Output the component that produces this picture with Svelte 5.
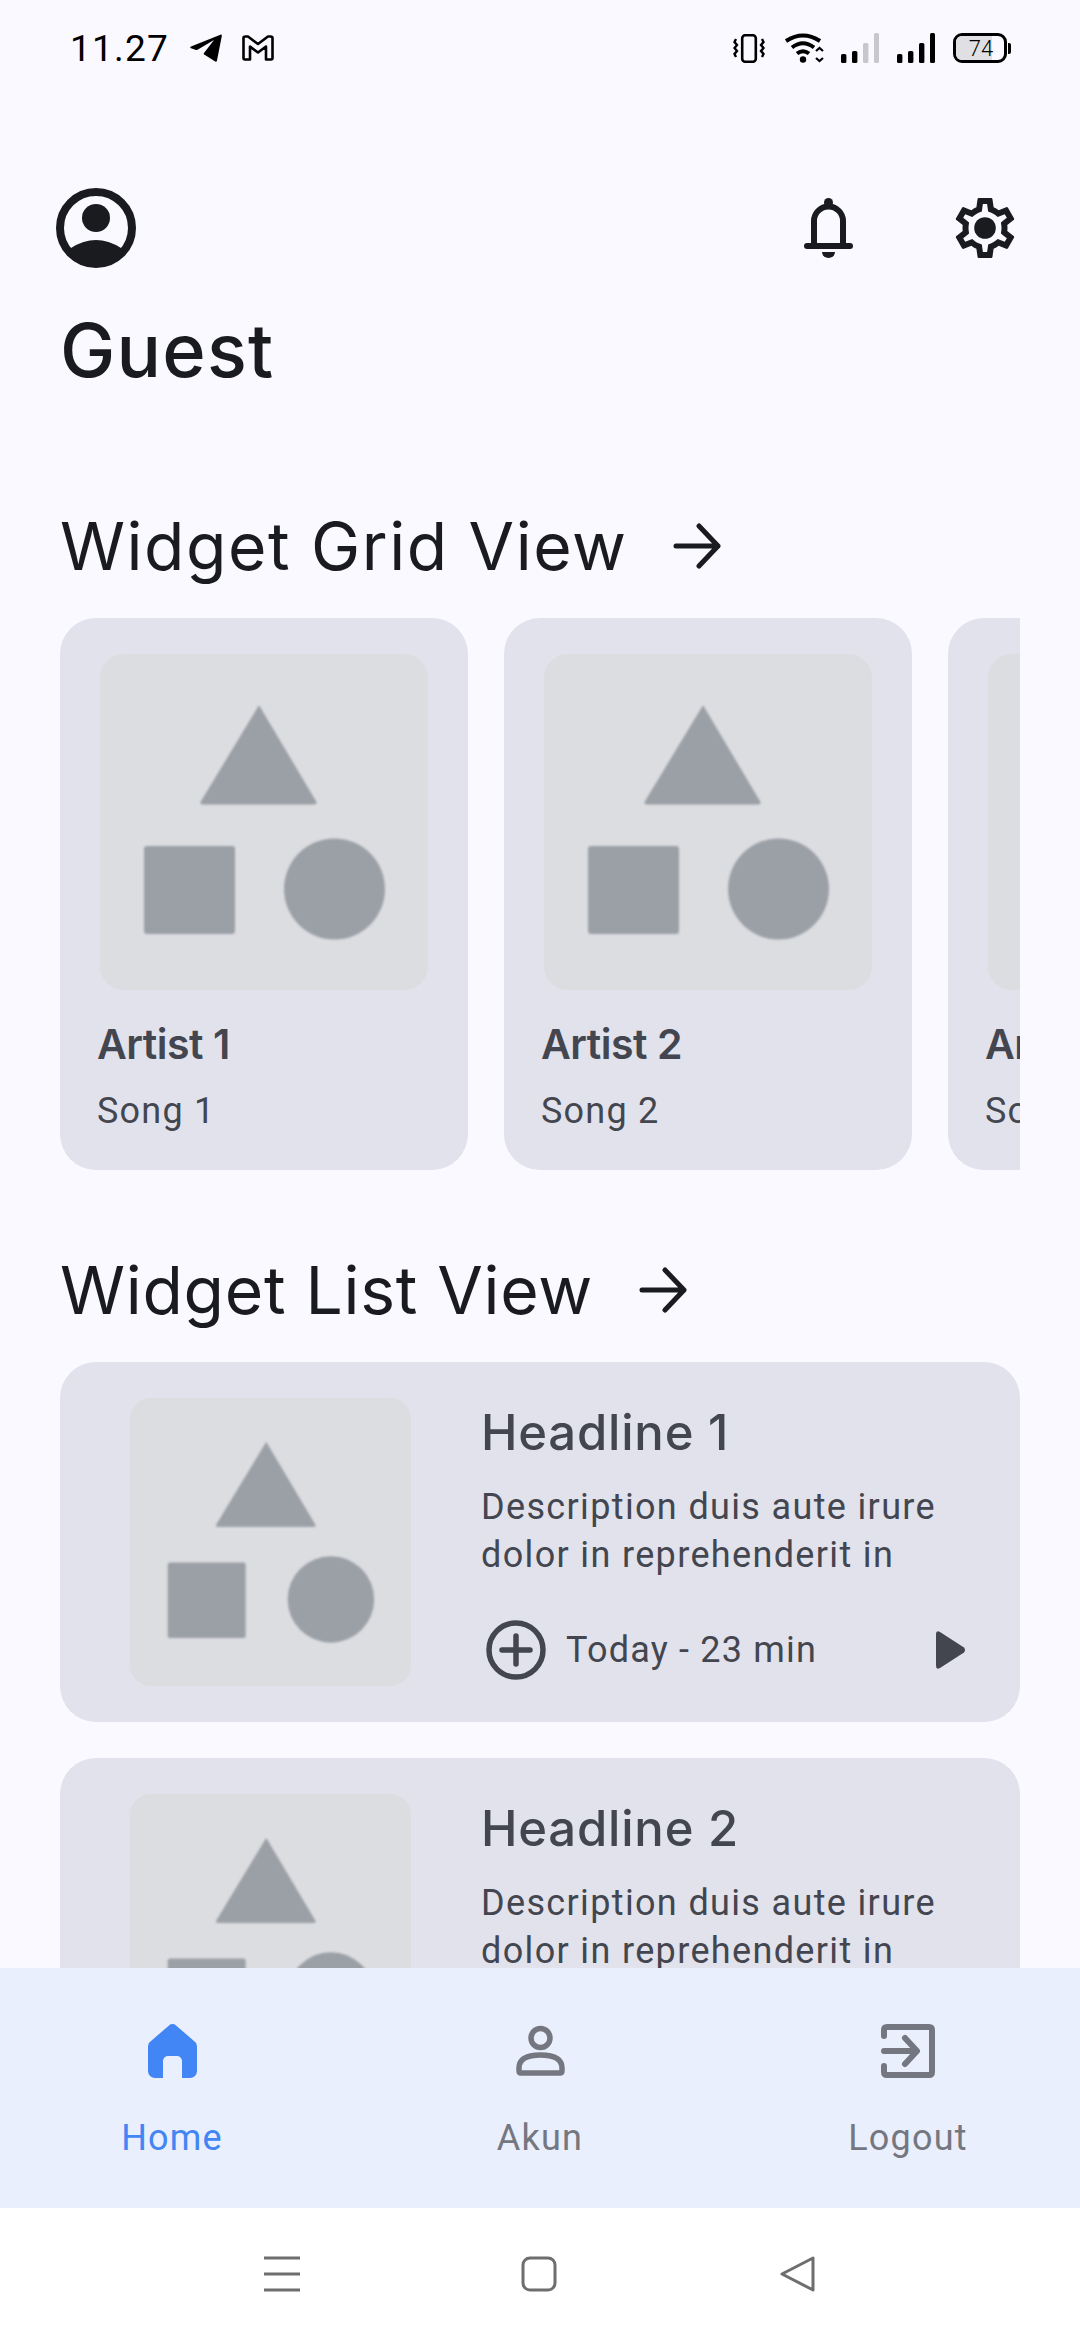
<script>
  const artists = [
    { name: 'Artist 1', song: 'Song 1' },
    { name: 'Artist 2', song: 'Song 2' },
    { name: 'Artist 3', song: 'Song 3' }
  ]
  const headlines = ['Headline 1', 'Headline 2', 'Headline 3']
</script>

{#snippet placeholder(cls)}
  <div class="thumb {cls}">
    <svg class="shapes" viewBox="0 0 328 336">
      <path d="M159 52 L216 148 Q217 150 214 150 H103 Q100 150 101 148 Z" fill="#9ba0a6" stroke="#9ba0a6" stroke-width="1" stroke-linejoin="round"/>
      <rect x="44" y="192" width="91" height="88" rx="3" fill="#9ba0a6"/>
      <circle cx="234.5" cy="235" r="50.5" fill="#9ba0a6"/>
    </svg>
  </div>
{/snippet}

{#snippet arrow()}
  <svg class="arrow" viewBox="0 0 48 46" fill="none" stroke="#1a1b1f" stroke-width="5" stroke-linecap="round" stroke-linejoin="round">
    <path d="M3 23 H45 M26 3 L45 23 L26 43"/>
  </svg>
{/snippet}

<div class="screen">
  <div class="status">
    <span class="time">11.27</span>
    <svg class="tg" viewBox="0 0 32 28"><path d="M31 0.5 Q32 0.5 31.8 2 L27 26.5 Q26.6 28.5 24.8 27.3 L14.2 20.6 Q13.2 19.9 14 19 L24 6 L7.5 15.8 Q6.8 16.2 6 15.9 L1 14.2 Q-0.5 13.4 1 12.5 Z" fill="#000"/></svg>
    <svg class="gm" viewBox="0 0 32 26" fill="none" stroke="#000" stroke-width="2.6" stroke-linejoin="round"><path d="M1.5 3 Q1.5 1.5 3.5 1.5 H6 L16 9 L26 1.5 H28.5 Q30.5 1.5 30.5 3 V23 Q30.5 24.5 29 24.5 H24 V11.5 L16 17.5 L8 11.5 V24.5 H3 Q1.5 24.5 1.5 23 Z"/></svg>
    <div class="status-right">
      <svg class="vib" viewBox="0 0 32 29" fill="none" stroke="#000"><rect x="9.2" y="1.2" width="13.6" height="26.6" rx="3" stroke-width="2.6"/><path d="M3 5 L1.5 8 L4 11 L1.5 14 L4 17 L1.5 20 L3 23 M29 5 L30.5 8 L28 11 L30.5 14 L28 17 L30.5 20 L29 23" stroke-width="2.4"/></svg>
      <svg class="wifi" viewBox="0 0 40 30" fill="none" stroke="#000" stroke-width="4"><path d="M1 8 Q18 -3 35 8 M7 14.5 Q18 6 29 14.5 M12 20.5 Q18 16 24 20.5"/><circle cx="18" cy="26.5" r="3.2" fill="#000" stroke="none"/><path d="M31 18 L34.5 15 L38 18 M31 25 L34.5 28 L38 25" stroke-width="2.2"/></svg>
      <svg class="sig" viewBox="0 0 38 30"><rect x="0" y="21" width="5.4" height="9" rx="1.5"/><rect x="11" y="18" width="5.4" height="12" rx="1.5"/><rect x="22" y="10" width="5.4" height="20" rx="1.5" fill="#c8c8cc"/><rect x="33" y="0" width="5" height="30" rx="1.5" fill="#c8c8cc"/></svg>
      <svg class="sig" viewBox="0 0 38 30"><rect x="0" y="21" width="5.4" height="9" rx="1.5"/><rect x="11" y="18" width="5.4" height="12" rx="1.5"/><rect x="22" y="10" width="5.4" height="20" rx="1.5"/><rect x="33" y="0" width="5" height="30" rx="1.5"/></svg>
      <div class="battery">
        <div class="battery-fill"></div>
        <span class="battery-num">74</span>
      </div>
      <div class="battery-nub"></div>
    </div>
  </div>

  <div class="scroll">
    <div class="top-row">
      <svg class="avatar" viewBox="0 0 80 80">
        <circle cx="40" cy="40" r="36" fill="none" stroke="#1a1b1f" stroke-width="8"/>
        <circle cx="40" cy="30" r="14" fill="#1a1b1f"/>
        <path d="M15 60 Q40 44 65 60 L68.5 62 A36 36 0 0 1 11.5 62 Z" fill="#1a1b1f"/>
      </svg>
      <svg class="bell" viewBox="0 0 49 60" fill="none" stroke="#1a1b1f" stroke-width="6" stroke-linecap="round">
        <path d="M10 48 V23 a14.5 14.5 0 0 1 29 0 V48"/>
        <path d="M3 48 H46"/>
        <circle cx="24.5" cy="4.5" r="4.5" fill="#1a1b1f" stroke="none"/>
        <path d="M18 54 H31 A6.5 6 0 0 1 18 54 Z" fill="#1a1b1f" stroke="none"/>
      </svg>
      <svg class="gear" viewBox="2 2 20 20" fill="#1a1b1f">
        <path d="M19.43 12.98c.04-.32.07-.64.07-.98 0-.34-.03-.66-.07-.98l2.11-1.65c.19-.15.24-.42.12-.64l-2-3.46c-.09-.16-.26-.25-.44-.25-.06 0-.12.01-.17.03l-2.49 1c-.52-.4-1.08-.73-1.69-.98l-.38-2.65C14.46 2.18 14.25 2 14 2h-4c-.25 0-.46.18-.49.42l-.38 2.65c-.61.25-1.17.59-1.69.98l-2.49-1c-.06-.02-.12-.03-.18-.03-.17 0-.34.09-.43.25l-2 3.46c-.13.22-.07.49.12.64l2.11 1.65c-.04.32-.07.65-.07.98 0 .33.03.66.07.98l-2.11 1.65c-.19.15-.24.42-.12.64l2 3.46c.09.16.26.25.44.25.06 0 .12-.01.17-.03l2.49-1c.52.4 1.08.73 1.69.98l.38 2.65c.03.24.24.42.49.42h4c.25 0 .46-.18.49-.42l.38-2.65c.61-.25 1.17-.59 1.69-.98l2.49 1c.06.02.12.03.18.03.17 0 .34-.09.43-.25l2-3.46c.12-.22.07-.49-.12-.64l-2.11-1.65zm-1.98-1.71c.04.31.05.52.05.73 0 .21-.02.43-.05.73l-.14 1.13.89.7 1.08.84-.7 1.21-1.27-.51-1.04-.42-.9.68c-.43.32-.84.56-1.25.73l-1.06.43-.16 1.13-.2 1.35h-1.4l-.19-1.35-.16-1.13-1.06-.43c-.43-.18-.83-.41-1.23-.71l-.91-.7-1.06.43-1.27.51-.7-1.21 1.08-.84.89-.7-.14-1.13c-.03-.31-.05-.54-.05-.74s.02-.43.05-.73l.14-1.13-.89-.7-1.08-.84.7-1.21 1.27.51 1.04.42.9-.68c.43-.32.84-.56 1.25-.73l1.06-.43.16-1.13.2-1.35h1.39l.19 1.35.16 1.13 1.06.43c.43.18.83.41 1.23.71l.91.7 1.06-.43 1.27-.51.7 1.21-1.07.85-.89.7.14 1.13z"/>
        <circle cx="12" cy="12" r="3.6"/>
      </svg>
    </div>

    <h1 class="guest">Guest</h1>

    <div class="section-head first">
      <span class="section-title">Widget Grid View</span>
      {@render arrow()}
    </div>
    <div class="grid-row">
      {#each artists as item}
        <div class="grid-card">
          {@render placeholder('thumb-lg')}
          <div class="artist">{item.name}</div>
          <div class="song">{item.song}</div>
        </div>
      {/each}
    </div>

    <div class="section-head">
      <span class="section-title tight">Widget List View</span>
      {@render arrow()}
    </div>
    <div class="list">
      {#each headlines as headline}
        <div class="list-card">
          {@render placeholder('thumb-sm')}
          <div class="list-body">
            <div class="headline">{headline}</div>
            <div class="desc">Description duis aute irure<br>dolor in reprehenderit in</div>
            <div class="meta">
              <svg class="plus" viewBox="0 0 60 60" fill="none" stroke="#44464f" stroke-width="5.5" stroke-linecap="round">
                <circle cx="30" cy="30" r="27"/>
                <path d="M30 16 V44 M16 30 H44"/>
              </svg>
              <span class="meta-text">Today - 23 min</span>
              <svg class="play" viewBox="0 0 30 38"><path d="M0 3 Q0 -1 4 1 L28 16.5 Q30 19 28 21.5 L4 37 Q0 39 0 35 Z" fill="#44464f"/></svg>
            </div>
          </div>
        </div>
      {/each}
    </div>
  </div>

  <nav class="tabs">
    <div class="tab active">
      <svg class="tab-icon" viewBox="0 0 49 54"><path d="M21 1.5 a5 5 0 0 1 7 0 L46 17 a6 6 0 0 1 3 5 V47 a7 7 0 0 1 -7 7 H34 V37 a5 5 0 0 0 -5 -5 H20 a5 5 0 0 0 -5 5 V54 H7 a7 7 0 0 1 -7 -7 V22 a6 6 0 0 1 3 -5 Z" fill="#4285f4"/></svg>
      <span>Home</span>
    </div>
    <div class="tab">
      <svg class="tab-icon" viewBox="0 0 49 54" fill="none" stroke="#757780" stroke-width="5.5"><circle cx="24.5" cy="14" r="9.5"/><path d="M3 44 Q3 31 24.5 31 Q46 31 46 44 V47 Q46 49 44 49 H5 Q3 49 3 47 Z"/></svg>
      <span>Akun</span>
    </div>
    <div class="tab">
      <svg class="tab-icon logout" viewBox="0 0 54 54" fill="none" stroke="#757780" stroke-width="6" stroke-linecap="round" stroke-linejoin="round"><path d="M3 12 V6 Q3 3 6 3 H48 Q51 3 51 6 V48 Q51 51 48 51 H6 Q3 51 3 48 V42"/><path d="M3 27 H35 M24 14 L36 27 L24 40"/></svg>
      <span>Logout</span>
    </div>
  </nav>

  <div class="sysnav">
    <svg class="sys" viewBox="0 0 36 36" fill="none" stroke="#6e6e6e" stroke-width="3"><path d="M0 2 H36 M0 18 H36 M0 34 H36"/></svg>
    <svg class="sys" viewBox="0 0 36 36" fill="none" stroke="#6e6e6e" stroke-width="3"><rect x="2" y="2" width="32" height="32" rx="7"/></svg>
    <svg class="sys back" viewBox="0 0 36 36" fill="none" stroke="#6e6e6e" stroke-width="3" stroke-linejoin="round"><path d="M33 2 V34 L2 18 Z"/></svg>
  </div>
</div>

<style>
  :global(body) {
    margin: 0;
    background: #faf9ff;
  }

  .screen {
    width: 1080px;
    height: 2340px;
    display: flex;
    flex-direction: column;
    overflow: hidden;
    background: #faf9ff;
    font-family: Roboto, sans-serif;
  }

  .status {
    height: 96px;
    flex-shrink: 0;
    display: flex;
    align-items: center;
    padding: 0 69px 0 70px;
    box-sizing: border-box;
    color: #000;
  }

  .time {
    font-size: 37px;
    width: 120px;
    letter-spacing: 1.2px;
  }

  .tg {
    width: 32px;
    height: 28px;
    margin-right: 20px;
  }

  .gm {
    width: 32px;
    height: 26px;
  }

  .status-right {
    margin-left: auto;
    display: flex;
    align-items: center;
  }

  .vib {
    width: 32px;
    height: 29px;
    margin-right: 20px;
  }

  .wifi {
    width: 40px;
    height: 30px;
    margin-right: 16px;
  }

  .sig {
    width: 38px;
    height: 30px;
    margin-right: 18px;
  }

  .battery {
    width: 54px;
    height: 30px;
    box-sizing: border-box;
    border: 3px solid #000;
    border-radius: 9px;
    position: relative;
    overflow: hidden;
    display: flex;
    align-items: center;
    justify-content: center;
  }

  .battery-fill {
    position: absolute;
    left: 0;
    top: 0;
    bottom: 0;
    width: 36px;
    background: #e0e0e4;
  }

  .battery-num {
    position: relative;
    font-size: 22px;
    font-weight: 300;
    margin-left: 2px;
  }

  .battery-nub {
    width: 3px;
    height: 11px;
    margin-left: 1px;
    background: #000;
    border-radius: 0 2px 2px 0;
  }

  .scroll {
    flex: 1;
    min-height: 0;
    overflow: hidden;
  }

  .top-row {
    margin-top: 92px;
    height: 80px;
    display: flex;
    align-items: center;
    padding: 0 65px 0 56px;
  }

  .avatar {
    width: 80px;
    height: 80px;
    margin-right: auto;
  }

  .bell {
    width: 49px;
    height: 60px;
    margin-right: 102px;
  }

  .gear {
    width: 60px;
    height: 60px;
  }

  .guest {
    margin: 42px 0 0;
    padding-left: 60px;
    height: 80px;
    line-height: 80px;
    font-family: Inter, sans-serif;
    font-size: 74px;
    font-weight: 500;
    color: #1a1b1f;
    letter-spacing: 1.2px;
  }

  .section-head {
    margin: 80px 0 32px;
    padding-left: 60px;
    height: 80px;
    display: flex;
    align-items: center;
  }

  .section-head.first {
    margin-top: 116px;
  }

  .section-title {
    font-family: Inter, sans-serif;
    font-size: 66px;
    font-weight: 400;
    letter-spacing: 1.5px;
    color: #1a1b1f;
    margin-right: 46px;
    white-space: nowrap;
  }

  .section-title.tight {
    letter-spacing: 0.7px;
  }

  .arrow {
    width: 48px;
    height: 46px;
  }

  .grid-row {
    margin: 0 60px;
    display: flex;
    gap: 36px;
    overflow: hidden;
  }

  .grid-card {
    width: 408px;
    height: 552px;
    flex-shrink: 0;
    box-sizing: border-box;
    padding: 36px 40px;
    background: #e1e2ec;
    border-radius: 36px;
    color: #44464f;
  }

  .thumb {
    background: #dcdde1;
    border-radius: 24px;
    flex-shrink: 0;
  }

  .thumb-lg {
    width: 328px;
    height: 336px;
  }

  .thumb-sm {
    width: 281px;
    height: 288px;
    border-radius: 21px;
  }

  .shapes {
    display: block;
    width: 100%;
    height: 100%;
    filter: blur(1px);
  }

  .artist {
    margin: 24px 0 0 -3px;
    height: 60px;
    line-height: 60px;
    font-family: Inter, sans-serif;
    font-size: 41px;
    font-weight: 600;
    letter-spacing: -0.5px;
  }

  .song {
    margin: 12px 0 0 -3px;
    height: 50px;
    line-height: 50px;
    font-size: 36px;
    letter-spacing: 1.2px;
  }

  .list {
    margin: 0 60px;
    display: flex;
    flex-direction: column;
    gap: 36px;
  }

  .list-card {
    height: 360px;
    flex-shrink: 0;
    box-sizing: border-box;
    padding: 36px 54px 0 70px;
    display: flex;
    gap: 70px;
    background: #e1e2ec;
    border-radius: 36px;
    color: #44464f;
  }

  .list-body {
    flex: 1;
    min-width: 0;
    padding-top: 2px;
  }

  .headline {
    height: 66px;
    line-height: 66px;
    font-family: Inter, sans-serif;
    font-size: 49px;
    font-weight: 500;
    letter-spacing: 0.8px;
  }

  .desc {
    margin-top: 17px;
    font-size: 36px;
    line-height: 48px;
    letter-spacing: 1.35px;
    white-space: nowrap;
  }

  .meta {
    margin: 41px 0 0 5px;
    display: flex;
    align-items: center;
  }

  .plus {
    width: 60px;
    height: 60px;
    margin-right: 20px;
  }

  .meta-text {
    font-size: 36px;
    letter-spacing: 1.2px;
  }

  .play {
    width: 30px;
    height: 38px;
    margin-left: auto;
  }

  .tabs {
    height: 240px;
    flex-shrink: 0;
    box-sizing: border-box;
    padding-top: 52px;
    display: grid;
    grid-template-columns: repeat(3, 368px);
    justify-content: center;
    background: #e9effc;
  }

  .tab {
    display: flex;
    flex-direction: column;
    align-items: center;
    color: #757780;
    font-size: 36px;
    letter-spacing: 1.2px;
  }

  .tab.active {
    color: #4285f4;
  }

  .tab-icon {
    width: 49px;
    height: 54px;
    margin: 4px 0 39px;
  }

  .tab-icon.logout {
    width: 54px;
  }

  .sysnav {
    height: 132px;
    flex-shrink: 0;
    display: flex;
    justify-content: center;
    align-items: center;
    gap: 221px;
    padding-bottom: 1px;
    box-sizing: border-box;
    background: #fff;
  }

  .sys {
    width: 36px;
    height: 36px;
  }

  .sys.back {
    margin-left: 2px;
  }
</style>
